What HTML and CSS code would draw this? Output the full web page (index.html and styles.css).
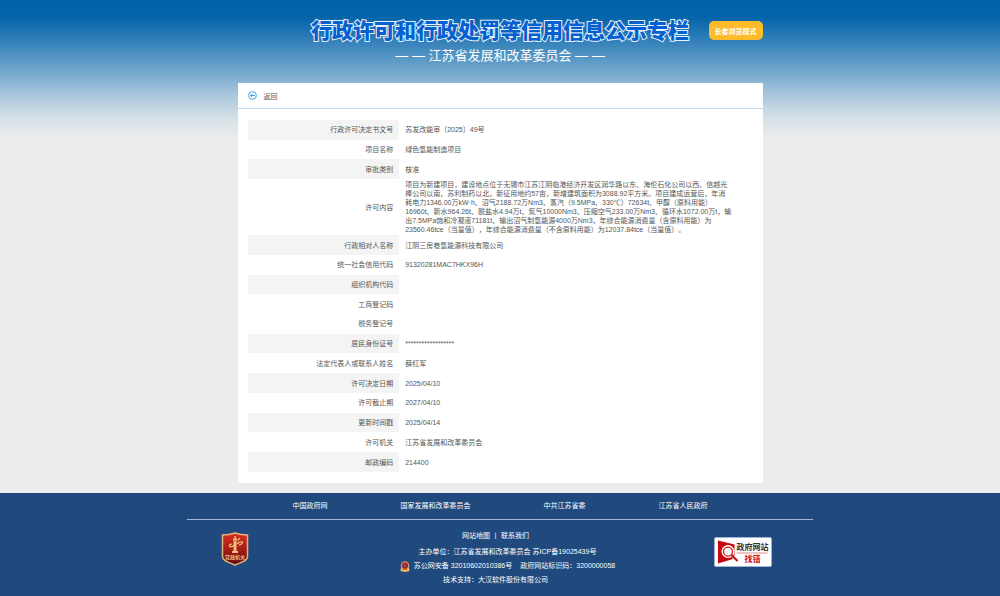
FILE: index.html
```html
<!DOCTYPE html>
<html lang="zh-CN">
<head>
  <meta charset="UTF-8">
  <meta name="viewport" content="width=device-width, initial-scale=1.0">
  <title>行政许可和行政处罚等信用信息公示专栏</title>
  <link rel="stylesheet" href="styles.css">
</head>
<body>
  <header class="header">
    <div class="header-top">
      <h1>行政许可和行政处罚等信用信息公示专栏</h1>
      <button type="button" class="elder-btn">长者浏览模式</button>
    </div>
    <p class="subtitle">— — 江苏省发展和改革委员会 — —</p>
  </header>

  <main class="panel">
    <div class="panel-head">
      <a href="#" class="back">
        <svg width="9" height="9" viewBox="0 0 18 18" fill="none" stroke="#3fa4ee" stroke-width="2">
          <circle cx="9" cy="9" r="7.800"/>
          <path d="M14 9H5M8.500 5.500L5 9l3.500 3.500"/>
        </svg>
        返回
      </a>
    </div>
    <table class="info">
      <tbody>
        <tr class="shade"><th scope="row">行政许可决定书文号</th><td>苏发改能审〔2025〕49号</td></tr>
        <tr><th scope="row">项目名称</th><td>绿色氢能制造项目</td></tr>
        <tr class="shade"><th scope="row">审批类别</th><td>核准</td></tr>
        <tr class="content">
          <th scope="row">许可内容</th>
          <td>项目为新建项目，建设地点位于无锡市江苏江阴临港经济开发区润华路以东、海伦石化公司以西、信越光<br>棒公司以南、苏利制药以北，新征用地约57亩，新增建筑面积为3088.92平方米。项目建成运营后，年消<br>耗电力1346.00万kW·h、沼气2188.72万Nm3、蒸汽（9.5MPa、330℃）72634t、甲醇（原料用能）<br>16960t、新水964.26t、脱盐水4.94万t、氮气10000Nm3、压缩空气233.00万Nm3、循环水1072.00万t，输<br>出7.5MPa饱和冷凝液71181t、输出沼气制氢能源4000万Nm3，年综合能源消费量（含原料用能）为<br>23560.46tce（当量值），年综合能源消费量（不含原料用能）为12037.84tce（当量值）。</td>
        </tr>
        <tr class="shade"><th scope="row">行政相对人名称</th><td>江阴三房巷氢能源科技有限公司</td></tr>
        <tr><th scope="row">统一社会信用代码</th><td>91320281MAC7HKX96H</td></tr>
        <tr class="shade"><th scope="row">组织机构代码</th><td></td></tr>
        <tr><th scope="row">工商登记码</th><td></td></tr>
        <tr><th scope="row">税务登记号</th><td></td></tr>
        <tr class="shade"><th scope="row">居民身份证号</th><td>******************</td></tr>
        <tr><th scope="row">法定代表人或联系人姓名</th><td>薛红军</td></tr>
        <tr class="shade"><th scope="row">许可决定日期</th><td>2025/04/10</td></tr>
        <tr><th scope="row">许可截止期</th><td>2027/04/10</td></tr>
        <tr class="shade"><th scope="row">更新时间戳</th><td>2025/04/14</td></tr>
        <tr><th scope="row">许可机关</th><td>江苏省发展和改革委员会</td></tr>
        <tr class="shade"><th scope="row">邮政编码</th><td>214400</td></tr>
      </tbody>
    </table>
  </main>

  <footer class="footer">
    <div class="footer-inner">
      <nav class="links">
        <a href="#">中国政府网</a>
        <a href="#">国家发展和改革委员会</a>
        <a href="#">中共江苏省委</a>
        <a href="#">江苏省人民政府</a>
      </nav>
      <div class="footer-main">
        <a href="#" class="badge" aria-label="党政机关">
          <svg width="28" height="34" viewBox="0 0 56 68">
            <defs>
              <linearGradient id="red" x1="0" y1="0" x2="0" y2="1">
                <stop offset="0" stop-color="#d3301f"/>
                <stop offset=".5" stop-color="#a81d16"/>
                <stop offset="1" stop-color="#5d0d0c"/>
              </linearGradient>
            </defs>
            <path d="M28 2C20 5 11 6 3 6v44c0 8 14 11 25 16 11-5 25-8 25-16V6c-8 0-17-1-25-4z" fill="url(#red)" stroke="#e3b27c" stroke-width="3"/>
            <path d="M25 18h6v20h-6zM22 38h12v4H22zM24 13h8v4h-8zM27 8h3v6h-3z" fill="#f1bd7c"/>
            <path d="M17 29c4 3 10-3 15-6 5-2 9-5 11-3 1 3-4 6-7 6M18 29c-3-2 0-5 4-5M33 17l5-5" fill="none" stroke="#f1bd7c" stroke-width="2.500"/>
            <text x="28" y="54" text-anchor="middle" class="badge-text">党政机关</text>
          </svg>
        </a>
        <div class="footer-text">
          <p class="sitemap"><a href="#">网站地图</a> 丨 <a href="#">联系我们</a></p>
          <p class="shift">主办单位：江苏省发展和改革委员会 <a href="#">苏ICP备19025439号</a></p>
          <p class="shift record">
            <svg width="10" height="11" viewBox="0 0 20 22">
              <path d="M2 13l-1 7 9 2 9-2-1-7z" fill="#f0c063"/>
              <circle cx="10" cy="9" r="8.500" fill="#d9a05a"/>
              <path d="M10 2l6 3v5c0 4-3 6-6 7-3-1-6-3-6-7V5z" fill="#c7281f"/>
              <path d="M4 9l6-4 6 4-2 4H6z" fill="#2b3d86"/>
              <path d="M10 5l1 3h3l-2 2 1 3-3-2-3 2 1-3-2-2h3z" fill="#e5392b"/>
              <path d="M5 18l5-2 5 2" fill="none" stroke="#b86a2c" stroke-width="1.500"/>
            </svg>
            <a href="#">苏公网安备 32010602010386号</a>
            <span>政府网站标识码：3200000058</span>
          </p>
          <p>技术支持：大汉软件股份有限公司</p>
        </div>
        <a href="#" class="report" aria-label="政府网站找错">
          <svg width="58" height="30" viewBox="0 0 116 60">
            <rect x="1" y="1" width="114" height="58" rx="3" fill="#fff" stroke="#9db5d3" stroke-width="2"/>
            <path d="M8 7l33 8v28L8 53z" fill="#c8070e"/>
            <path d="M38 39l9 9" stroke="#fff" stroke-width="7"/>
            <circle cx="28" cy="29" r="13" fill="#fff"/>
            <circle cx="28" cy="29" r="9" fill="#fff" stroke="#c8070e" stroke-width="2.500"/>
            <path d="M35 36l12 12" stroke="#c8070e" stroke-width="4"/>
            <text x="45" y="26" class="report-top">政府网站</text>
            <path d="M45 32h62" stroke="#dd8a8a" stroke-width="2"/>
            <text x="61" y="49" class="report-bottom">找错</text>
          </svg>
        </a>
      </div>
    </div>
  </footer>
</body>
</html>
```

FILE: styles.css
```css
* {
  box-sizing: border-box;
}
body {
  margin: 0;
  min-height: 100vh;
  display: flex;
  flex-direction: column;
  font-family: "Liberation Sans", "Noto Sans CJK SC", sans-serif;
  font-size: 7px;
  text-spacing-trim: space-all;
  color: #555;
  background: #ededed linear-gradient(#0262aa 0, #0464aa 16px, #1c72b2 30px, #4a8fc0 52px, #7bacd0 75px, #adc9de 97px, #d5e0e7 117px, #ededed 140px) no-repeat;
}
h1, p {
  margin: 0;
}
a {
  color: inherit;
  text-decoration: none;
}
svg {
  display: block;
}

/* header */
.header {
  width: 525px;
  max-width: 100%;
  height: 83px;
  margin: 0 auto;
  padding-top: 15px;
  color: #fff;
}
.header-top {
  display: grid;
  grid-template-columns: 1fr auto 1fr;
  align-items: center;
}
.header h1 {
  grid-column: 2;
  font-size: 21px;
  line-height: 31px;
  font-weight: 900;
  color: #0560d0;
  -webkit-text-stroke: 2px #e8f1fb;
  paint-order: stroke fill;
  white-space: nowrap;
}
.elder-btn {
  justify-self: end;
  width: 54px;
  height: 19px;
  padding: 0;
  border: none;
  border-radius: 5px;
  background: #fdbb2c;
  color: #fff;
  font-family: inherit;
  font-size: 7px;
  font-weight: bold;
  cursor: pointer;
}
.subtitle {
  font-size: 13px;
  line-height: 20px;
  text-align: center;
}

/* detail panel */
.panel {
  width: 525px;
  max-width: 100%;
  margin: 0 auto 10px;
  padding-bottom: 11px;
  background: #fff;
}
.panel-head {
  padding: 0 10px;
  border-bottom: 1px solid #c5dcea;
}
.back {
  display: inline-flex;
  align-items: center;
  gap: 7px;
  height: 25px;
  vertical-align: top;
}
.info {
  width: 504px;
  max-width: 100%;
  height: 352px;
  margin: 11px auto 0;
  border-collapse: collapse;
  line-height: 9px;
}
.info th {
  width: 30%;
  padding: 0 6px;
  font-weight: normal;
  text-align: right;
}
.info td {
  padding: 0 6px;
}
.info .content {
  height: 56px;
}
.shade th {
  background: #f4f4f4;
}

/* footer */
.footer {
  flex: 1;
  background: #20497e;
  color: #fff;
}
.footer-inner {
  width: 626px;
  max-width: 100%;
  margin: 0 auto;
}
.links {
  display: flex;
  justify-content: center;
  gap: 73px;
  line-height: 26px;
  border-bottom: 1px solid #a6b6cb;
}
.footer-main {
  display: flex;
  justify-content: space-between;
  padding: 9px 41px 0 34px;
}
.badge {
  padding-top: 3px;
}
.badge-text {
  font-size: 10px;
  font-weight: bold;
  fill: #f1bd7c;
}
.footer-text {
  flex: 1;
  padding-left: 28px;
  line-height: 14px;
  text-align: center;
}
.sitemap {
  margin-bottom: 2px;
}
.shift {
  padding-left: 24px;
}
.record {
  display: flex;
  justify-content: center;
  align-items: center;
  gap: 4px;
}
.record span {
  margin-left: 4px;
}
.report {
  padding-top: 8px;
}
.report-top,
.report-bottom {
  font-size: 16px;
  font-weight: bold;
  fill: #333;
}
.report-bottom {
  fill: #c8070e;
}
```
